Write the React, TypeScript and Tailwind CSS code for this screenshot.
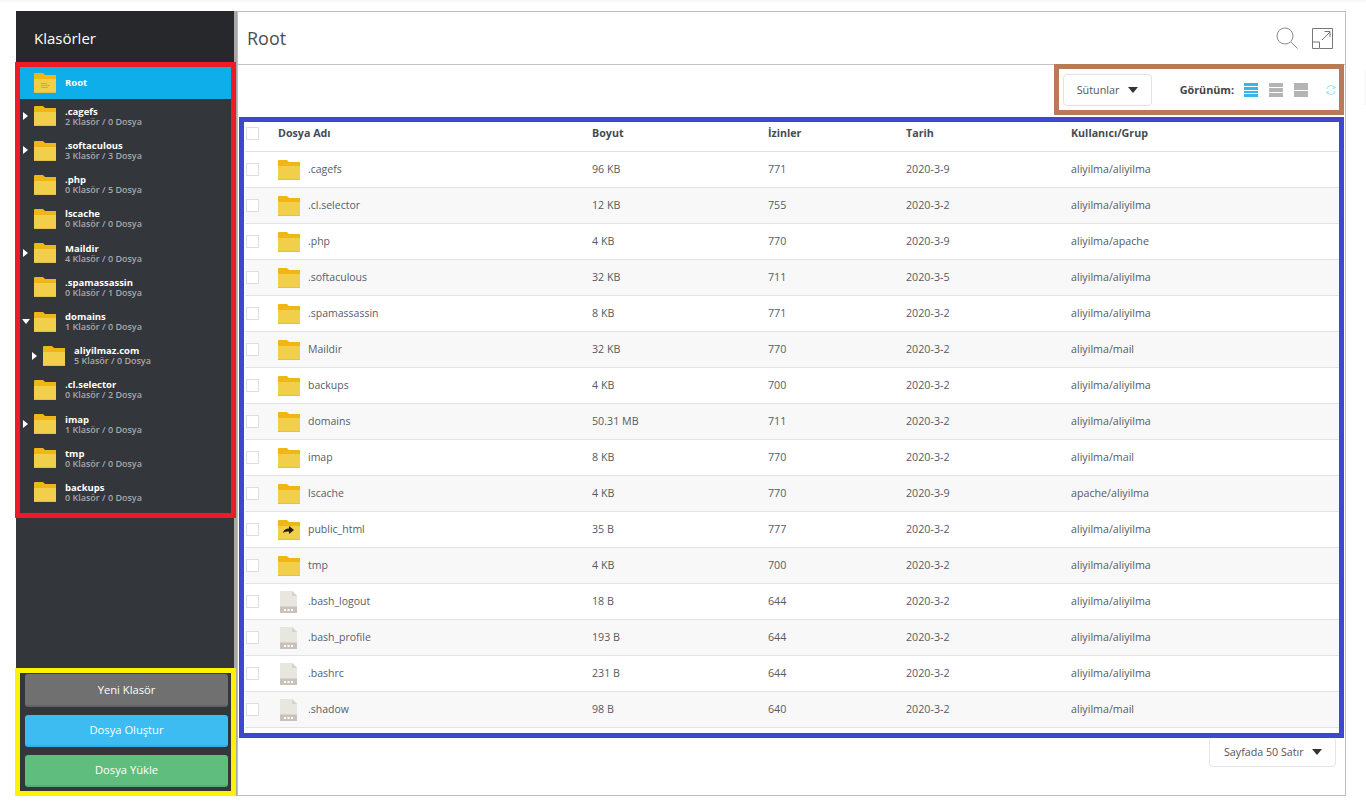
import React from 'react';

interface TreeItem {
  name: string;
  info: string;
  arrow?: 'right' | 'down';
  nested?: boolean;
}

interface FileRow {
  name: string;
  size: string;
  perm: string;
  date: string;
  owner: string;
  kind: 'folder' | 'link' | 'file';
}

const tree: TreeItem[] = [
  { name: '.cagefs', info: '2 Klasör / 0 Dosya', arrow: 'right' },
  { name: '.softaculous', info: '3 Klasör / 3 Dosya', arrow: 'right' },
  { name: '.php', info: '0 Klasör / 5 Dosya' },
  { name: 'lscache', info: '0 Klasör / 0 Dosya' },
  { name: 'Maildir', info: '4 Klasör / 0 Dosya', arrow: 'right' },
  { name: '.spamassassin', info: '0 Klasör / 1 Dosya' },
  { name: 'domains', info: '1 Klasör / 0 Dosya', arrow: 'down' },
  { name: 'aliyilmaz.com', info: '5 Klasör / 0 Dosya', arrow: 'right', nested: true },
  { name: '.cl.selector', info: '0 Klasör / 2 Dosya' },
  { name: 'imap', info: '1 Klasör / 0 Dosya', arrow: 'right' },
  { name: 'tmp', info: '0 Klasör / 0 Dosya' },
  { name: 'backups', info: '0 Klasör / 0 Dosya' },
];

const files: FileRow[] = [
  { name: '.cagefs', size: '96 KB', perm: '771', date: '2020-3-9', owner: 'aliyilma/aliyilma', kind: 'folder' },
  { name: '.cl.selector', size: '12 KB', perm: '755', date: '2020-3-2', owner: 'aliyilma/aliyilma', kind: 'folder' },
  { name: '.php', size: '4 KB', perm: '770', date: '2020-3-9', owner: 'aliyilma/apache', kind: 'folder' },
  { name: '.softaculous', size: '32 KB', perm: '711', date: '2020-3-5', owner: 'aliyilma/aliyilma', kind: 'folder' },
  { name: '.spamassassin', size: '8 KB', perm: '771', date: '2020-3-2', owner: 'aliyilma/aliyilma', kind: 'folder' },
  { name: 'Maildir', size: '32 KB', perm: '770', date: '2020-3-2', owner: 'aliyilma/mail', kind: 'folder' },
  { name: 'backups', size: '4 KB', perm: '700', date: '2020-3-2', owner: 'aliyilma/aliyilma', kind: 'folder' },
  { name: 'domains', size: '50.31 MB', perm: '711', date: '2020-3-2', owner: 'aliyilma/aliyilma', kind: 'folder' },
  { name: 'imap', size: '8 KB', perm: '770', date: '2020-3-2', owner: 'aliyilma/mail', kind: 'folder' },
  { name: 'lscache', size: '4 KB', perm: '770', date: '2020-3-9', owner: 'apache/aliyilma', kind: 'folder' },
  { name: 'public_html', size: '35 B', perm: '777', date: '2020-3-2', owner: 'aliyilma/aliyilma', kind: 'link' },
  { name: 'tmp', size: '4 KB', perm: '700', date: '2020-3-2', owner: 'aliyilma/aliyilma', kind: 'folder' },
  { name: '.bash_logout', size: '18 B', perm: '644', date: '2020-3-2', owner: 'aliyilma/aliyilma', kind: 'file' },
  { name: '.bash_profile', size: '193 B', perm: '644', date: '2020-3-2', owner: 'aliyilma/aliyilma', kind: 'file' },
  { name: '.bashrc', size: '231 B', perm: '644', date: '2020-3-2', owner: 'aliyilma/aliyilma', kind: 'file' },
  { name: '.shadow', size: '98 B', perm: '640', date: '2020-3-2', owner: 'aliyilma/mail', kind: 'file' },
];

const FolderIcon = ({ kind = 'plain' }: { kind?: 'plain' | 'lines' | 'link' }) => (
  <svg width="22" height="20" viewBox="0 0 22 20" className="shrink-0">
    <path d="M0 1a1 1 0 0 1 1-1h8l2 2h11v17.5H0z" fill="#eeb717" />
    <rect x="0" y="6" width="22" height="14" fill="#f2cf4b" />
    <rect x="0" y="19.3" width="22" height="0.7" fill="#d9b94a" />
    {kind === 'lines' && <path d="M7 10.5h6M7 12.5h9M7 14.5h7" stroke="#f08a3c" strokeWidth="0.8" />}
    {kind === 'link' && <path d="M5 13c.6-3 2.6-4.6 6-4.6V6l5 4-5 4v-2.6c-2.6 0-4.4.4-6 1.6z" fill="#1f1a10" />}
  </svg>
);

const FileIcon = () => (
  <svg width="17" height="22" viewBox="0 0 17 22" className="shrink-0">
    <path d="M0 0h12l5 5v12H0z" fill="#e8e7df" />
    <path d="M12 0l5 5h-5z" fill="#d6d4ca" />
    <rect x="0" y="15.5" width="17" height="6.5" fill="#cbc1bb" />
    <rect x="4" y="18" width="2" height="2" fill="#fff" />
    <rect x="7.5" y="18" width="2" height="2" fill="#fff" />
    <rect x="11" y="18" width="2" height="2" fill="#fff" />
  </svg>
);

const Caret = ({ className }: { className: string }) => (
  <svg width="10" height="6" viewBox="0 0 10 6" className={className}>
    <path d="M0 0h10L5 6z" fill="currentColor" />
  </svg>
);

const ViewIcon = ({ bars, active }: { bars: number; active?: boolean }) => (
  <div className="flex w-[14px] h-[14px] flex-col gap-px">
    {Array.from({ length: bars }).map((_, i) => (
      <div key={i} className={`flex-1 ${active ? 'bg-[#39b5ec]' : 'bg-[#b4b4b4]'}`} />
    ))}
  </div>
);

const CheckBox = () => <div className="w-[13px] h-[13px] border border-[#dedede] bg-white" />;

const Frame = ({ className }: { className: string }) => (
  <div className={`absolute border-[5px] pointer-events-none ${className}`} />
);

const App: React.FC = () => {
  return (
    <div className="relative w-[1366px] h-[812px] overflow-hidden bg-white font-['Open_Sans',sans-serif] text-[#555a63]">
      <div className="h-[2px] bg-[#f8f8f8]" />
      <div className="absolute left-[1364px] top-[70px] w-[2px] h-[35px] bg-[#f8f8f8]" />
      <div className="flex ml-4 mt-[9px] w-[1330px] h-[785px]">
        {/* Sidebar */}
        <aside className="w-[218px] shrink-0 flex flex-col bg-[#33363b]">
          <div className="h-[51px] shrink-0 flex items-center pl-[18px] pt-[3px] bg-[#27282c] text-white text-[15px] leading-none">
            Klasörler
          </div>
          <div className="flex-1 pt-[5px] pl-[4px] pr-[3px]">
            <div className="flex items-center h-[32.3px] pl-[14px] bg-[#0daeea]">
              <FolderIcon kind="lines" />
              <span className="ml-[9px] text-white text-[9.5px] font-bold">Root</span>
            </div>
            {tree.map((item) => (
              <div key={item.name} className={`relative flex items-center h-[34.2px] ${item.nested ? 'pl-[23px]' : 'pl-[14px]'}`}>
                {item.arrow === 'right' && (
                  <svg width="5" height="8" viewBox="0 0 5 8" className={`absolute top-[13px] ${item.nested ? 'left-[12px]' : 'left-[3px]'}`}>
                    <path d="M0 0l5 4-5 4z" fill="#fff" />
                  </svg>
                )}
                {item.arrow === 'down' && (
                  <svg width="8" height="5" viewBox="0 0 8 5" className="absolute top-[15px] left-[2px]">
                    <path d="M0 0h8L4 5z" fill="#fff" />
                  </svg>
                )}
                <FolderIcon />
                <div className="ml-[9px] pt-px flex flex-col text-[9px] leading-[10px] font-semibold">
                  <span className="text-white font-bold text-[9.5px]">{item.name}</span>
                  <span className="text-[#a7a9ac]">{item.info}</span>
                </div>
              </div>
            ))}
          </div>
          <div className="shrink-0 flex flex-col gap-[8px] pl-[9px] pr-[6px] pb-[9px]">
            <button className="h-[33px] pt-px rounded-[3px] bg-[#6f706f] border-b-2 border-[#626362] text-white text-[11.2px]">Yeni Klasör</button>
            <button className="h-[32px] pt-px rounded-[3px] bg-[#3cbcf0] border-b-2 border-[#2eb1ee] text-white text-[11.2px]">Dosya Oluştur</button>
            <button className="h-[32px] pt-px rounded-[3px] bg-[#5fbe7e] border-b-2 border-[#4fb070] text-white text-[11.2px]">Dosya Yükle</button>
          </div>
        </aside>
        <div className="w-[3px] shrink-0 bg-[#a8a8a8]" />

        {/* Main */}
        <main className="flex-1 flex flex-col border border-[#bdbdbd]">
          <header className="h-[53px] shrink-0 flex items-center justify-between border-b border-[#c4c4c4] pl-[9px] pr-[12px]">
            <h1 className="text-[18px] leading-none font-normal text-[#4a4e55]">Root</h1>
            <div className="flex items-center gap-[14px]">
              <svg width="22" height="22" viewBox="0 0 22 22" fill="none" stroke="#8a8a8a" strokeWidth="1">
                <circle cx="9" cy="9" r="8" />
                <path d="M15 15l6.5 6.5" />
              </svg>
              <svg width="21" height="21" viewBox="0 0 21 21" fill="none" stroke="#777" strokeWidth="1">
                <path d="M.5 14V.5h20v20H8" />
                <path d="M.5 14h7v6.5h-7z" />
                <path d="M10 12l8-8M12.5 3.5h5.5v5.5" />
              </svg>
            </div>
          </header>
          <div className="h-[50px] shrink-0 flex items-center justify-end pr-[8px]">
            <button className="flex items-center justify-between w-[89px] h-[32px] px-[13px] border border-[#e3e3e3] rounded-[4px] text-[10.8px] text-[#555]">
              Sütunlar
              <Caret className="text-[#333]" />
            </button>
            <span className="ml-[28px] text-[10.8px] font-bold text-[#444]">Görünüm:</span>
            <div className="flex items-center gap-[11px] ml-[10px]">
              <ViewIcon bars={4} active />
              <ViewIcon bars={3} />
              <ViewIcon bars={2} />
            </div>
            <svg width="10" height="10" viewBox="0 0 10 10" fill="none" stroke="#9fdcf6" strokeWidth="1" className="ml-[18px] mr-px">
              <path d="M1 4a4 4 0 0 1 7-2l1 1M9 6a4 4 0 0 1-7 2L1 7" />
              <path d="M9 .8v2.4H6.6M1 9.2V6.8h2.4" />
            </svg>
          </div>

          {/* Table */}
          <div className="ml-[7px] mr-[5px] text-[10.7px]">
            <div className="flex items-center h-[37px] border-b border-[#e2e2e2] font-bold text-[#444b55]">
              <div className="w-[33px] pl-px"><CheckBox /></div>
              <div className="w-[314px]">Dosya Adı</div>
              <div className="w-[176px]">Boyut</div>
              <div className="w-[138px]">İzinler</div>
              <div className="w-[165px]">Tarih</div>
              <div>Kullanıcı/Grup</div>
            </div>
            {files.map((f, i) => (
              <div key={f.name} className={`flex items-center h-[36px] border-b border-[#e2e2e2] ${i % 2 === 1 ? 'bg-[#f8f8f8]' : 'bg-white'}`}>
                <div className="w-[33px] pl-px"><CheckBox /></div>
                <div className="w-[314px] flex items-center">
                  <div className="w-[30px] flex">
                    {f.kind === 'file' ? <div className="pl-[2px]"><FileIcon /></div> : <FolderIcon kind={f.kind === 'link' ? 'link' : 'plain'} />}
                  </div>
                  <span className="text-[#555e6b] text-[10.5px]">{f.name}</span>
                </div>
                <div className="w-[176px]">{f.size}</div>
                <div className="w-[138px]">{f.perm}</div>
                <div className="w-[165px]">{f.date}</div>
                <div>{f.owner}</div>
              </div>
            ))}
          </div>
          <div className="flex justify-end mt-[9px] pr-[9px]">
            <button className="flex items-center justify-between w-[127px] h-[30px] pl-[14px] pr-[13px] border border-[#e6e6e6] rounded-[4px] text-[10.7px] text-[#555]">
              Sayfada 50 Satır
              <Caret className="text-[#333]" />
            </button>
          </div>
        </main>
      </div>

      {/* Annotation frames */}
      <Frame className="left-[15px] top-[62px] w-[221px] h-[456px] border-[#ed1c24]" />
      <Frame className="left-[15px] top-[668px] w-[221px] h-[128px] border-[#fff200]" />
      <Frame className="left-[1054px] top-[64px] w-[290px] h-[51px] border-[#b97a57]" />
      <Frame className="left-[239px] top-[117px] w-[1105px] h-[621px] border-[#3f48cc]" />
    </div>
  );
};

export default App;
